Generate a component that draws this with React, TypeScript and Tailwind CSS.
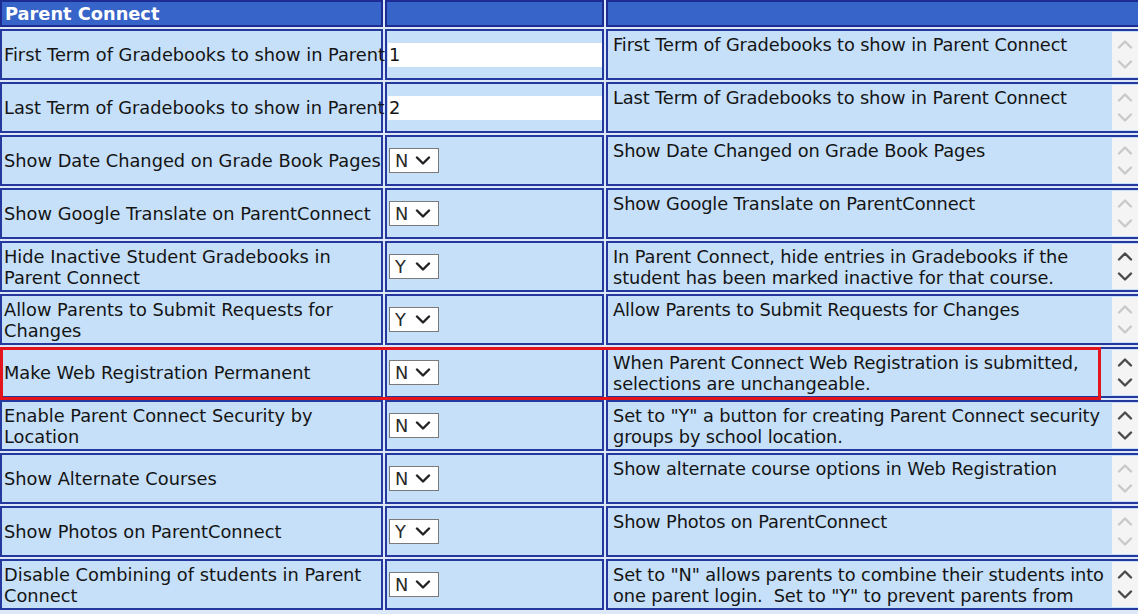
type Row = {
  label: string[];
  value: string;
  kind: "input" | "select";
  desc: string[];
  scroll: boolean;
};

const rows: Row[] = [
  { label: ["First Term of Gradebooks to show in Parent"], value: "1", kind: "input", desc: ["First Term of Gradebooks to show in Parent Connect"], scroll: false },
  { label: ["Last Term of Gradebooks to show in Parent"], value: "2", kind: "input", desc: ["Last Term of Gradebooks to show in Parent Connect"], scroll: false },
  { label: ["Show Date Changed on Grade Book Pages"], value: "N", kind: "select", desc: ["Show Date Changed on Grade Book Pages"], scroll: false },
  { label: ["Show Google Translate on ParentConnect"], value: "N", kind: "select", desc: ["Show Google Translate on ParentConnect"], scroll: false },
  { label: ["Hide Inactive Student Gradebooks in", "Parent Connect"], value: "Y", kind: "select", desc: ["In Parent Connect, hide entries in Gradebooks if the", "student has been marked inactive for that course."], scroll: true },
  { label: ["Allow Parents to Submit Requests for", "Changes"], value: "Y", kind: "select", desc: ["Allow Parents to Submit Requests for Changes"], scroll: false },
  { label: ["Make Web Registration Permanent"], value: "N", kind: "select", desc: ["When Parent Connect Web Registration is submitted,", "selections are unchangeable."], scroll: true },
  { label: ["Enable Parent Connect Security by", "Location"], value: "N", kind: "select", desc: ["Set to \"Y\" a button for creating Parent Connect security", "groups by school location."], scroll: true },
  { label: ["Show Alternate Courses"], value: "N", kind: "select", desc: ["Show alternate course options in Web Registration"], scroll: false },
  { label: ["Show Photos on ParentConnect"], value: "Y", kind: "select", desc: ["Show Photos on ParentConnect"], scroll: false },
  { label: ["Disable Combining of students in Parent", "Connect"], value: "N", kind: "select", desc: ["Set to \"N\" allows parents to combine their students into", "one parent login.  Set to \"Y\" to prevent parents from"], scroll: true },
];

function Chevron({ up, color }: { up?: boolean; color: string }) {
  return (
    <svg width="16" height="10" viewBox="0 0 16 10" fill="none">
      <path
        d={up ? "M2 8.5 L8 2.5 L14 8.5" : "M2 1.5 L8 7.5 L14 1.5"}
        stroke={color}
        strokeWidth="2.4"
        strokeLinecap="round"
        strokeLinejoin="round"
      />
    </svg>
  );
}

function FakeSelect({ value }: { value: string }) {
  return (
    <div className="w-[50px] h-[25px] bg-white border border-[#7a7a7a] flex items-center justify-between pl-[5px] pr-[7px]">
      <span className="text-[#2a2a2a]">{value}</span>
      <Chevron color="#222" />
    </div>
  );
}

export default function App() {
  return (
    <div
      className="relative w-[1138px] h-[614px] overflow-hidden bg-[#dce8f7] text-[17.8px] leading-[21px] text-[#141414]"
      style={{ fontFamily: '"DejaVu Sans", Verdana, sans-serif' }}
    >
      <table className="table-fixed border-separate border-spacing-[2px] -ml-[2px] -mt-[2px] w-[1145px]">
        <colgroup>
          <col className="w-[383px]" />
          <col className="w-[219px]" />
          <col className="w-[535px]" />
        </colgroup>
        <tbody>
          {/* header */}
          <tr>
            <td className="h-[27px] bg-[#3764c8] border-2 border-[#1d2c92] px-[3px] text-white font-bold whitespace-nowrap">
              Parent Connect
            </td>
            <td className="h-[27px] bg-[#3764c8] border-2 border-[#1d2c92]" />
            <td className="h-[27px] bg-[#3764c8] border-2 border-[#1d2c92]" />
          </tr>

          {rows.map((row) => (
            <tr key={row.label.join(" ")}>
              <td className="h-[51px] bg-[#c6e0fa] border-2 border-[#24389e] px-[2px] py-0 align-middle">
                {row.label.map((line) => (
                  <div key={line} className="whitespace-nowrap">{line}</div>
                ))}
              </td>
              <td className="h-[51px] bg-[#c6e0fa] border-2 border-[#24389e] p-0 align-middle">
                {row.kind === "input" ? (
                  <div className="ml-[1px] h-[24px] bg-white flex items-center pl-[1px]">{row.value}</div>
                ) : (
                  <div className="ml-[2px]">
                    <FakeSelect value={row.value} />
                  </div>
                )}
              </td>
              <td className="h-[51px] bg-[#c6e0fa] border-2 border-[#24389e] p-0 align-top">
                {/* textarea look-alike */}
                <div className="flex h-[45px] ml-[1px] mt-[1px]">
                  <div className="flex-1 pl-[4px] pt-[2px] overflow-hidden tracking-[-0.12px]">
                    {row.desc.map((line) => (
                      <div key={line} className="whitespace-pre">{line}</div>
                    ))}
                  </div>
                  <div className="w-[26px] bg-[#f4f4f4] flex flex-col items-center justify-between py-[7px] mr-[1px]">
                    <Chevron up color={row.scroll ? "#4a4a4a" : "#c9c9c9"} />
                    <Chevron color={row.scroll ? "#4a4a4a" : "#c9c9c9"} />
                  </div>
                </div>
              </td>
            </tr>
          ))}
        </tbody>
      </table>

      {/* red highlight around the Web Registration row */}
      <div className="absolute left-0 top-[347px] w-[1101px] h-[53px] border-[3px] border-[#e3141c] pointer-events-none" />
    </div>
  );
}
